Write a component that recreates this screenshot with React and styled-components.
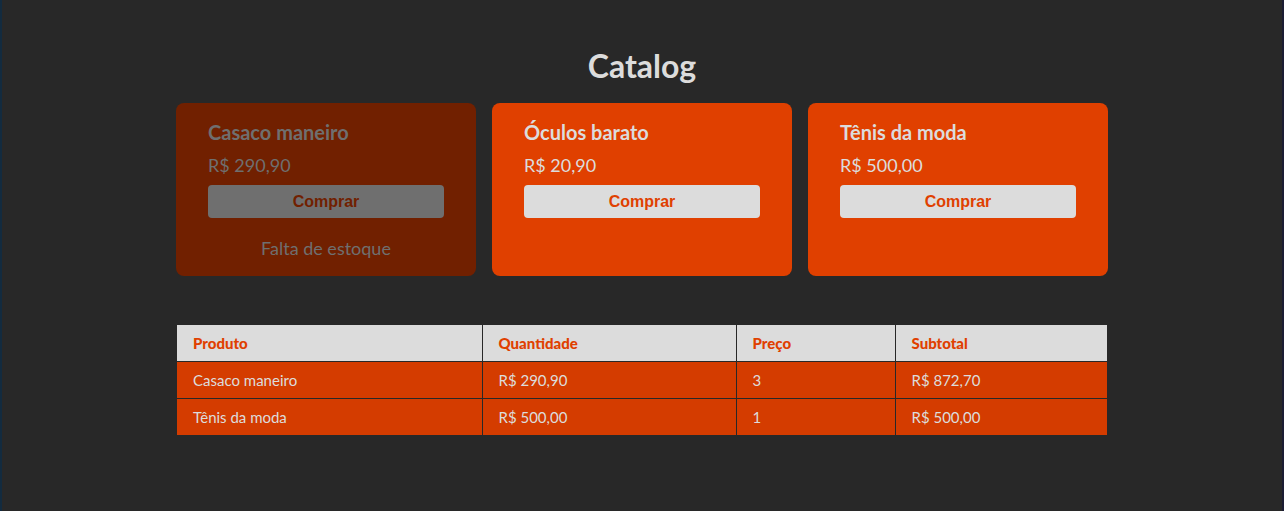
import React from 'react'
import styled, { createGlobalStyle } from 'styled-components'

const products = [
  { id: 1, name: 'Casaco maneiro', price: 'R$ 290,90', inStock: false },
  { id: 2, name: 'Óculos barato', price: 'R$ 20,90', inStock: true },
  { id: 3, name: 'Tênis da moda', price: 'R$ 500,00', inStock: true },
]

const cart = [
  { id: 1, name: 'Casaco maneiro', price: 'R$ 290,90', qty: 3, subtotal: 'R$ 872,70' },
  { id: 3, name: 'Tênis da moda', price: 'R$ 500,00', qty: 1, subtotal: 'R$ 500,00' },
]

const GlobalStyle = createGlobalStyle`
  html, body {
    margin: 0;
    padding: 0;
    background: #282828;
  }
  body {
    font-family: Lato, "Open Sans", sans-serif;
    color: #dcdcdc;
  }
`

const Page = styled.div`
  min-height: 511px;
  box-sizing: border-box;
  border-left: 2px solid #132b3f;
  border-right: 2px solid #1b1d33;
  padding-top: 48px;
  display: flex;
  flex-direction: column;
  align-items: center;
`

const Title = styled.h1`
  margin: 0 0 19px;
  font-size: 32px;
  line-height: 36px;
  font-weight: 700;
  color: #dcdcdc;
`

const CardList = styled.div`
  display: flex;
  gap: 16px;
`

const Card = styled.div`
  width: 300px;
  box-sizing: border-box;
  padding: 17px 32px 17px;
  border-radius: 8px;
  background: ${p => (p.disabled ? '#712000' : '#e04000')};
  color: ${p => (p.disabled ? '#6f6f6f' : '#dcdcdc')};
  display: flex;
  flex-direction: column;
`

const CardTitle = styled.h2`
  margin: 0;
  font-size: 20px;
  line-height: 24px;
  font-weight: 700;
`

const Price = styled.p`
  margin: 10px 0 9px;
  font-size: 18px;
  line-height: 22px;
`

const BuyButton = styled.button`
  height: 33px;
  border: none;
  border-radius: 4px;
  font-family: "Liberation Sans", Arial, sans-serif;
  font-size: 16px;
  font-weight: 700;
  background: ${p => (p.disabled ? '#6f6f6f' : '#dcdcdc')};
  color: ${p => (p.disabled ? '#712000' : '#e04000')};
  cursor: ${p => (p.disabled ? 'default' : 'pointer')};
`

const OutOfStock = styled.p`
  margin: 19px 0 0;
  text-align: center;
  font-size: 18px;
  line-height: 22px;
`

const Table = styled.table`
  margin-top: 49px;
  width: 930px;
  border-collapse: collapse;
  table-layout: fixed;
`

const Th = styled.th`
  width: ${p => p.w}px;
  box-sizing: border-box;
  background: #dcdcdc;
  color: #e04000;
  text-align: left;
  font-size: 15px;
  font-weight: 900;
  height: 36px;
  padding: 0 16px;
  border: 1px solid #282828;
  border-top: none;
`

const Td = styled.td`
  background: #d43c00;
  color: #dcdcdc;
  font-size: 15px;
  height: 36px;
  padding: 0 16px;
  border: 1px solid #282828;
  border-bottom: none;
`

const Row = styled.tr`
  & > *:first-child { border-left: none; }
  & > *:last-child { border-right: none; }
`

export default function App() {
  return (
    <>
      <GlobalStyle />
      <Page>
        <Title>Catalog</Title>
        <CardList>
          {products.map(p => (
            <Card key={p.id} disabled={!p.inStock}>
              <CardTitle>{p.name}</CardTitle>
              <Price>{p.price}</Price>
              <BuyButton disabled={!p.inStock}>Comprar</BuyButton>
              {!p.inStock && <OutOfStock>Falta de estoque</OutOfStock>}
            </Card>
          ))}
        </CardList>
        <Table>
          <thead>
            <Row>
              <Th w={305}>Produto</Th>
              <Th w={254}>Quantidade</Th>
              <Th w={159}>Preço</Th>
              <Th w={212}>Subtotal</Th>
            </Row>
          </thead>
          <tbody>
            {cart.map(item => (
              <Row key={item.id}>
                <Td>{item.name}</Td>
                <Td>{item.price}</Td>
                <Td>{item.qty}</Td>
                <Td>{item.subtotal}</Td>
              </Row>
            ))}
          </tbody>
        </Table>
      </Page>
    </>
  )
}
